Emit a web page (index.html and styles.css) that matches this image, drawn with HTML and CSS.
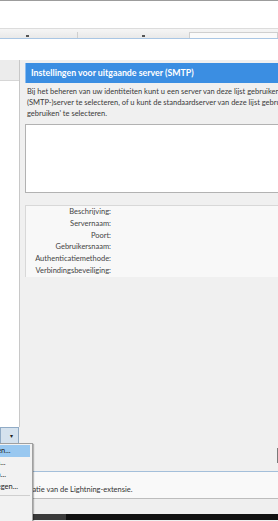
FILE: index.html
```html
<!DOCTYPE html>
<html lang="nl">
<head>
<meta charset="utf-8">
<title>Accountinstellingen</title>
<link rel="stylesheet" href="styles.css">
</head>
<body>
<div class="app">
  <div class="topline"></div>
  <div class="toolbar"></div>
  <div class="tabstrip">
    <div class="tab tab-one"><span class="dot"></span></div>
    <div class="tab tab-two"><span class="dot"></span></div>
    <div class="tab tab-active"></div>
  </div>
  <div class="subbar"></div>
  <div class="main">
    <div class="leftcol">
      <div class="tree">
        <div class="treehead"></div>
      </div>
      <div class="actions"><span class="arrow">▾</span></div>
    </div>
    <div class="rightcol">
      <div class="header">Instellingen voor uitgaande server (SMTP)</div>
      <p class="desc">Bij het beheren van uw identiteiten kunt u een server van deze lijst gebruiken door deze als uitgaande<br>(SMTP-)server te selecteren, of u kunt de standaardserver van deze lijst gebruiken door 'Standaardserver<br>gebruiken' te selecteren.</p>
      <div class="listbox"></div>
      <div class="details">
        <div class="row"><span class="label">Beschrijving:</span><span class="value"></span></div>
        <div class="row"><span class="label">Servernaam:</span><span class="value"></span></div>
        <div class="row"><span class="label">Poort:</span><span class="value"></span></div>
        <div class="row"><span class="label">Gebruikersnaam:</span><span class="value"></span></div>
        <div class="row"><span class="label">Authenticatiemethode:</span><span class="value"></span></div>
        <div class="row"><span class="label">Verbindingsbeveiliging:</span><span class="value"></span></div>
      </div>
      <div class="buttons"><span class="btn"></span></div>
    </div>
  </div>
  <div class="status">Integratie van de Lightning-extensie.</div>
  <div class="statusfoot"></div>
  <div class="taskbar"><span class="task"></span></div>

  <div class="menu">
    <div class="item hover">E-mailaccount toevoegen...</div>
    <div class="item">Chataccount toevoegen...</div>
    <div class="item">Feedaccount toevoegen...</div>
    <div class="item">Overige account toevoegen...</div>
    <div class="sep"></div>
    <div class="item">Standaard</div>
  </div>
</div>
</body>
</html>
```

FILE: styles.css
```css
* { box-sizing: border-box; }
html, body {
  margin: 0;
  padding: 0;
}
body {
  width: 278px;
  height: 521px;
  overflow: hidden;
  font-family: "Lato", "Noto Sans", sans-serif;
  font-size: 7.5px;
  color: #333;
  background: #f0f0f0;
}
.app {
  position: relative;
  width: 278px;
  height: 521px;
  overflow: hidden;
  display: flex;
  flex-direction: column;
}
.topline { height: 1px; background: #9c9c9c; }
.toolbar { height: 27px; background: #ffffff; }
.tabstrip {
  height: 11px;
  display: flex;
  align-items: flex-end;
  border-top: 1px solid #dcdcdc;
  border-bottom: 1px solid #a9c6e4;
  background: linear-gradient(#f5f5f5, #e9e9e9);
}
.tab {
  height: 9px;
  display: flex;
  align-items: flex-end;
}
.tab-one {
  width: 78px;
  border-right: 1px solid #cfcfcf;
  height: 6px;
  padding-left: 26px;
}
.tab-two {
  width: 111px;
  padding-left: 64px;
}
.tab-active {
  flex: 1;
  height: 6px;
  background: #fafafa;
  border: 1px solid #cfcfcf;
  border-bottom: none;
}
.dot {
  width: 3px;
  height: 2px;
  background: #555;
  margin-bottom: 1px;
}
.subbar { height: 21px; background: #ffffff; }

.main {
  height: 411px;
  display: flex;
  overflow: hidden;
}
.leftcol {
  width: 20px;
  flex: none;
  display: flex;
  flex-direction: column;
}
.tree {
  height: 367px;
  background: #ffffff;
  border-right: 1px solid #c8c8c8;
}
.treehead {
  height: 21px;
  background: #ececec;
  border-bottom: 1px solid #d6d6d6;
}
.actions {
  height: 17px;
  width: 19px;
  background: #d5e2ee;
  border: 1px solid #90abc6;
  display: flex;
  align-items: center;
  justify-content: flex-end;
  padding-right: 5px;
  font-size: 6px;
  color: #222;
}
.rightcol {
  width: 320px;
  flex: none;
  margin-left: 5px;
  padding-top: 3px;
}
.header {
  height: 20px;
  background: #3b8ee2;
  border-left: 1px solid #8cbdf0;
  color: #ffffff;
  font-weight: 700;
  font-size: 8.8px;
  line-height: 20px;
  padding-left: 5px;
  white-space: nowrap;
}
.desc {
  margin: 3px 0 0 0;
  padding-left: 2px;
  line-height: 11px;
  color: #3a3a3a;
  white-space: nowrap;
}
.listbox {
  margin-top: 5px;
  height: 69px;
  background: #ffffff;
  border: 1px solid #b2b2b2;
  border-right: none;
}
.details {
  margin-top: 12px;
  height: 72px;
  background: #f8f8f8;
  border: 1px solid #d8d8d8;
  border-right: none;
  border-bottom: none;
}
.row {
  display: flex;
  height: 11.8px;
  line-height: 11.8px;
}
.label {
  width: 85px;
  text-align: right;
  color: #444;
  white-space: nowrap;
}
.buttons {
  margin-top: 171px;
  padding-left: 252px;
  display: flex;
}
.btn {
  width: 20px;
  height: 15px;
  border: 1px solid #7a7a7a;
  background: #e1e1e1;
}
.status {
  height: 28px;
  border-top: 1px solid #a4bfda;
  border-bottom: 1px solid #bdbdbd;
  background: #f9f9f9;
  padding-left: 13px;
  padding-top: 12px;
  line-height: 11px;
  color: #333;
  white-space: nowrap;
}
.statusfoot { height: 15px; background: #efefef; }
.taskbar {
  height: 6px;
  background: #111111;
  display: flex;
  padding-left: 33px;
}
.task {
  width: 33px;
  background: #3a3a3a;
}
.menu {
  position: absolute;
  left: -100px;
  top: 443px;
  width: 133px;
  height: 90px;
  background: #f2f2f2;
  border: 1px solid #a0a0a0;
  box-shadow: 1px 1px 1px rgba(0,0,0,0.25);
  padding: 1px 2px 0 2px;
}
.item {
  height: 12px;
  line-height: 12px;
  padding-left: 19px;
  color: #222;
  white-space: nowrap;
}
.item.hover { background: #99c8f0; }
.sep {
  height: 1px;
  background: #cfcfcf;
  margin: 2px 0 2px 24px;
}
```
